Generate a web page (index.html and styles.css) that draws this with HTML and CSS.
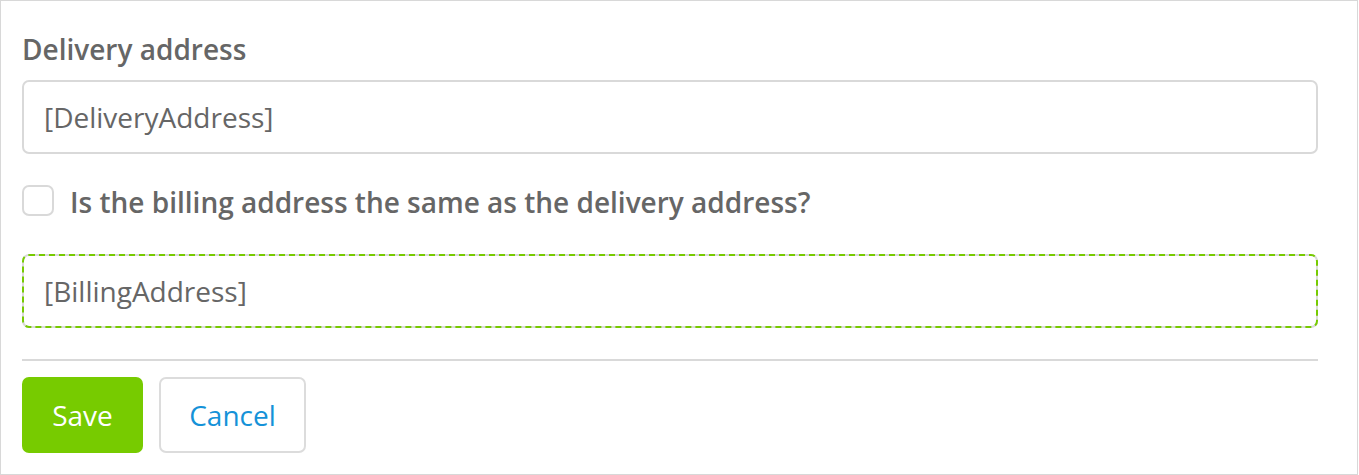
FILE: index.html
```html
<!DOCTYPE html>
<html lang="en">
<head>
<meta charset="utf-8">
<title>Address form</title>
<link rel="stylesheet" href="styles.css">
</head>
<body>
<form class="frame">
  <label class="field-label" for="delivery">Delivery address</label>
  <div class="input" id="delivery">[DeliveryAddress]</div>
  <label class="check-row">
    <span class="checkbox"></span>
    <span class="check-label">Is the billing address the same as the delivery address?</span>
  </label>
  <div class="input input-focus">[BillingAddress]</div>
  <hr class="divider">
  <div class="actions">
    <button type="button" class="btn btn-save">Save</button>
    <button type="button" class="btn btn-cancel">Cancel</button>
  </div>
</form>
</body>
</html>
```
FILE: styles.css
```css
html, body {
  margin: 0;
  padding: 0;
  background: #ffffff;
}

body {
  font-family: "Open Sans", "Liberation Sans", sans-serif;
  color: #666666;
}

.frame {
  box-sizing: border-box;
  width: 1358px;
  height: 475px;
  border: 1px solid #d8d8d8;
  padding: 29px 39px 0 21px;
  display: flex;
  flex-direction: column;
}

.field-label {
  display: block;
  font-size: 28px;
  line-height: 38px;
  font-weight: 600;
  color: #666666;
}

.input {
  box-sizing: border-box;
  height: 74px;
  margin-top: 12px;
  border: 2px solid #d9d9d9;
  border-radius: 7px;
  padding: 0 20px;
  display: flex;
  align-items: center;
  font-size: 28px;
  line-height: 38px;
  color: #666666;
  background: #ffffff;
}

.input-focus {
  margin-top: 33px;
  outline: 2px dashed #77cb00;
  outline-offset: -2px;
}

.check-row {
  display: flex;
  align-items: flex-start;
  gap: 16px;
  margin-top: 29px;
}

.checkbox {
  box-sizing: border-box;
  width: 32px;
  height: 31px;
  margin-top: 2px;
  border: 2px solid #d9d9d9;
  border-radius: 7px;
  background: #ffffff;
  flex: none;
}

.check-label {
  font-size: 28px;
  line-height: 38px;
  font-weight: 600;
  color: #666666;
}

.divider {
  margin: 31px 0 0 0;
  border: 0;
  height: 2px;
  background: #d9d9d9;
}

.actions {
  display: flex;
  gap: 16px;
  margin-top: 16px;
}

.btn {
  box-sizing: border-box;
  height: 76px;
  border-radius: 7px;
  font-family: "Open Sans", "Liberation Sans", sans-serif;
  font-size: 28px;
  line-height: 38px;
  padding: 0;
  cursor: pointer;
}

.btn-save {
  width: 121px;
  background: #77cb00;
  border: 0;
  color: #ffffff;
}

.btn-cancel {
  width: 147px;
  background: #ffffff;
  border: 2px solid #dcdcdc;
  color: #1592d8;
}
```
